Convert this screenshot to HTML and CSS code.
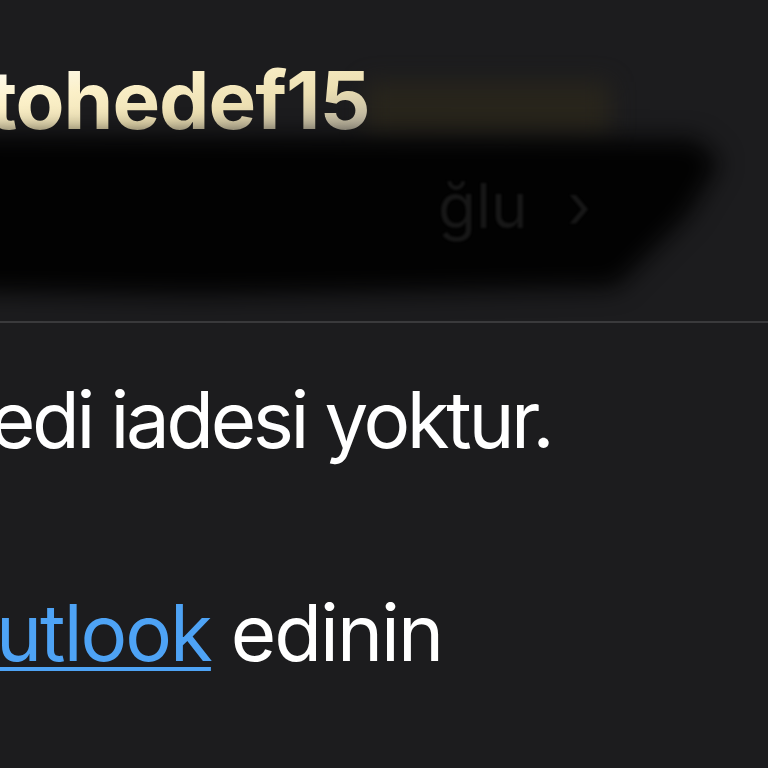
FILE: index.html
```
<!DOCTYPE html>
<html lang="tr">
<head>
<meta charset="utf-8">
<link rel="stylesheet" href="styles.css">
</head>
<body>
<div class="page">
  <section class="header">
    <div class="glow"></div>
    <h1 class="name">tohedef15</h1>
    <div class="smudge"><div class="smudge-shape"></div></div>
    <div class="sub">ğlu ›</div>
  </section>
  <section class="body">
    <p class="line first">edi iadesi yoktur.</p>
    <p class="line second"><a class="link" href="#">utlook</a> edinin</p>
  </section>
</div>
</body>
</html>
```
FILE: styles.css
```
html, body {
  margin: 0;
  padding: 0;
  background: #1c1c1e;
  overflow: hidden;
}
.page {
  width: 768px;
  height: 768px;
  background: #1c1c1e;
  font-family: Inter, "Liberation Sans", sans-serif;
  overflow: hidden;
}
.header {
  position: relative;
  height: 321px;
  border-bottom: 2px solid #3a3a3c;
}
.name {
  position: relative;
  z-index: 2;
  margin: 0 0 0 -12px;
  padding-top: 52px;
  font-size: 80px;
  font-weight: 700;
  line-height: 96px;
  letter-spacing: -1px;
  color: transparent;
  background: linear-gradient(170deg, #ffffff 25%, #fbf0c8 50%, #ecdfb2 70%, #a9a498 95%);
  -webkit-background-clip: text;
  background-clip: text;
  width: max-content;
}
.sub {
  position: absolute;
  z-index: 4;
  left: 438px;
  top: 166px;
  font-size: 62px;
  line-height: 80px;
  word-spacing: 22px;
  color: #171717;
  filter: blur(1px);
}
.smudge {
  position: absolute;
  z-index: 3;
  left: -40px;
  top: 120px;
  width: 800px;
  height: 190px;
  filter: blur(12px);
}
.smudge-shape {
  width: 100%;
  height: 100%;
  background: #020202;
  clip-path: polygon(0% 8%, 92% 10%, 95% 22%, 91% 50%, 82% 88%, 30% 92%, 0% 90%);
}
.glow {
  position: absolute;
  z-index: 0;
  left: 365px;
  top: 82px;
  width: 245px;
  height: 55px;
  background: #2b271b;
  filter: blur(12px);
  opacity: 0.8;
}
.body {
  padding-top: 47px;
}
.line {
  margin: 0;
  font-size: 78px;
  line-height: 100px;
  color: #ffffff;
  font-weight: 400;
  letter-spacing: -3.4px;
}
.first {
  margin-left: -10px;
}
.second {
  margin-top: 113px;
  margin-left: -4px;
  letter-spacing: -2px;
}
.link {
  color: #4ea3f5;
  text-decoration: underline;
  text-decoration-thickness: 4px;
  text-underline-offset: 6px;
}
```
